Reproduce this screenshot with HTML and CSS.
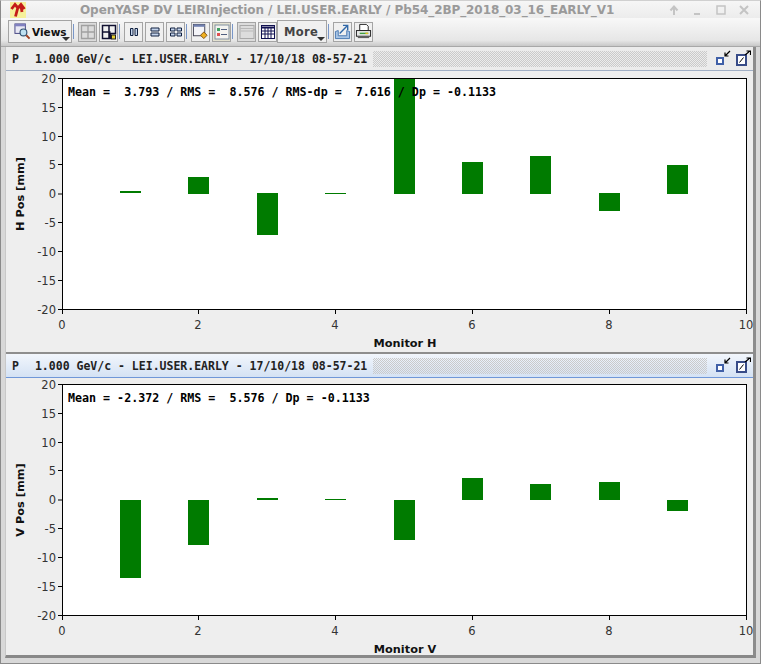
FILE: index.html
```html
<!DOCTYPE html>
<html>
<head>
<meta charset="utf-8">
<title>OpenYASP DV</title>
<link rel="stylesheet" href="styles.css">
</head>
<body>
<div class="window">
  <div class="titlebar">
    <svg class="appicon" width="16" height="16" viewBox="0 0 16 16"><rect width="16" height="16" fill="#f6f09a"/><path d="M1.500 7 L5 2.500 L8 6 L11 2.500 L14.500 7 M8 5 L5.500 14.500 M11 4 L12 10" fill="none" stroke="#c41c18" stroke-width="2.800"/></svg>
    <div class="title">OpenYASP DV LEIRInjection / LEI.USER.EARLY / Pb54_2BP_2018_03_16_EARLY_V1</div>
    <div class="wm">
      <svg width="12" height="12" viewBox="0 0 12 12"><path d="M6 11V3M2.500 6.500L6 2.500l3.500 4" fill="none" stroke="#c4c4c4" stroke-width="2"/></svg>
      <svg width="12" height="12" viewBox="0 0 12 12"><path d="M3 10h6" stroke="#c4c4c4" stroke-width="2"/></svg>
      <svg width="12" height="12" viewBox="0 0 12 12"><rect x="2" y="2" width="8" height="8" fill="none" stroke="#c4c4c4" stroke-width="1.500"/></svg>
      <svg width="12" height="12" viewBox="0 0 12 12"><path d="M2 2l8 8M10 2l-8 8" stroke="#c4c4c4" stroke-width="2"/></svg>
    </div>
  </div>
  <div class="toolbar">
    <button class="tb views">
      <svg width="17" height="17" viewBox="0 0 18 18"><rect x="1" y="1" width="11" height="10" fill="#e8e8f4" stroke="#404080"/><rect x="1" y="1" width="11" height="2.500" fill="#8080c0"/><circle cx="10" cy="10" r="3.600" fill="#bfe0f0" stroke="#305070" stroke-width="1.200"/><path d="M13 13l3.500 3.500" stroke="#a04020" stroke-width="2"/></svg>
      <span>Views</span><i class="caret"></i>
    </button>
    <i class="sep"></i>
    <button class="tb ic off"><svg width="16" height="16" viewBox="0 0 16 16"><path d="M1.500 1.500h13v13h-13zM8 1.500v13M1.500 8h13" fill="none" stroke="#a0a0a0" stroke-width="1.300"/></svg></button>
    <button class="tb ic"><svg width="16" height="16" viewBox="0 0 16 16"><path d="M1.500 1.500h13v8h-5v5h-8zM8 1.500v13M1.500 8h8" fill="none" stroke="#101030" stroke-width="1.500"/><rect x="10.500" y="11" width="4" height="4" fill="#e8d030" stroke="#202020"/></svg></button>
    <i class="sep"></i>
    <button class="tb ic"><svg width="12" height="12" viewBox="0 0 12 12"><path d="M2.500 2.500h2.500v7h-2.500zM7 2.500h2.500v7h-2.500z" fill="#c4d4ec" stroke="#102040"/></svg></button>
    <button class="tb ic"><svg width="12" height="12" viewBox="0 0 12 12"><path d="M2 2h8v3h-8zM2 7h8v3h-8z" fill="#c4d4ec" stroke="#102040"/></svg></button>
    <button class="tb ic"><svg width="14" height="12" viewBox="0 0 14 12"><path d="M1.500 2h4.500v3h-4.500zM8 2h4.500v3h-4.500zM1.500 7h4.500v3h-4.500zM8 7h4.500v3h-4.500z" fill="#c4d4ec" stroke="#102040"/></svg></button>
    <i class="sep"></i>
    <button class="tb ic"><svg width="17" height="17" viewBox="0 0 18 18"><rect x="1.500" y="1.500" width="12" height="12" fill="#f4f4f8" stroke="#404050"/><rect x="1.500" y="1.500" width="12" height="2.500" fill="#7080b0"/><path d="M12.500 9.500l3.500 3.500-3.500 3.500-3.500-3.500z" fill="#f0b020" stroke="#805010"/></svg></button>
    <button class="tb ic tint"><svg width="16" height="16" viewBox="0 0 16 16"><rect x="1" y="1" width="14" height="14" fill="#f4f4f0" stroke="#8090a0"/><rect x="3" y="4" width="3" height="3" fill="#40a060"/><path d="M7 5.500h6M7 10.500h6" stroke="#506080"/><rect x="3" y="9" width="3" height="3" fill="#e05050"/></svg></button>
    <i class="sep"></i>
    <button class="tb ic off"><svg width="16" height="16" viewBox="0 0 16 16"><rect x="1" y="1.500" width="14" height="13" fill="#dcdcdc" stroke="#a8a8a8"/><path d="M1 4.500h14M2 7h12" stroke="#b8b8b8"/></svg></button>
    <button class="tb ic"><svg width="16" height="16" viewBox="0 0 16 16"><rect x="1.500" y="1.500" width="13" height="13" fill="#fff" stroke="#101050"/><path d="M1.500 3.500h13" stroke="#101050" stroke-width="2"/><path d="M1.500 7h13M1.500 10h13M5 3v11M8 3v11M11 3v11" stroke="#101050"/></svg></button>
    <button class="tb more"><span>More</span><i class="caret"></i></button>
    <i class="sep"></i>
    <button class="tb ic"><svg width="17" height="17" viewBox="0 0 18 18"><path d="M1.500 9v7.500h15V9l-3 -1v5.500h-9V8z" fill="#a8c4e4" stroke="#4878b0"/><path d="M6 11L14 3M9.500 2.500h5v5" fill="none" stroke="#3068a8" stroke-width="1.500"/></svg></button>
    <button class="tb ic"><svg width="17" height="17" viewBox="0 0 18 18"><path d="M5 1.500h7l2 2V8H5z" fill="#fff" stroke="#202020"/><rect x="1.500" y="8" width="15" height="6" fill="#e8e8e8" stroke="#202020"/><path d="M5 11h9" stroke="#40a040" stroke-width="1.500"/><path d="M11 11h3" stroke="#e0c020" stroke-width="1.500"/><rect x="3" y="14" width="12" height="2" fill="#606060"/></svg></button>
  </div>
  <div class="content">
    <section class="panel">
      <div class="phead">
        <span class="ptext"><b>P</b><b>1.000 GeV/c - LEI.USER.EARLY - 17/10/18 08-57-21</b></span>
        <span class="dots"></span>
        <svg class="pic" width="15" height="17" viewBox="0 0 15 17"><rect x="1" y="8" width="6" height="6" fill="#fff" stroke="#4060a8" stroke-width="2"/><path d="M9 6l5-5M9 2.500V6h3.500" fill="none" stroke="#000" stroke-width="1.200"/></svg>
        <svg class="pic" width="15" height="17" viewBox="0 0 15 17"><rect x="1" y="5" width="9" height="10" fill="#fff" stroke="#384c88" stroke-width="2"/><path d="M3.500 12.500L7.500 7.500" stroke="#000"/><path d="M9 5l5-4M10.500 1h4v4" fill="none" stroke="#000" stroke-width="1.200"/></svg>
      </div>
      <svg class="chart" width="750" height="281" viewBox="1 0 750 281">
        <rect class="frame" x="57.500" y="7.500" width="684" height="231"/>
        <g class="bars">
          <rect x="115" y="120" width="21" height="2"/>
          <rect x="183" y="106" width="21" height="17"/>
          <rect x="252" y="122" width="21" height="42"/>
          <rect x="320" y="122" width="21" height="1"/>
          <rect x="389" y="7" width="21" height="116"/>
          <rect x="457" y="91" width="21" height="32"/>
          <rect x="525" y="85" width="21" height="38"/>
          <rect x="594" y="122" width="21" height="18"/>
          <rect x="662" y="94" width="21" height="29"/>
        </g>
        <rect class="edge" x="57.500" y="7.500" width="684" height="231"/>
        <path class="ticks" d="M53 7.500h4M53 36.500h4M53 65.500h4M53 93.500h4M53 123h4M53 151.500h4M53 180.500h4M53 209.500h4M53 238.500h4M57.500 238v5M193.500 238v5M330.500 238v5M467.500 238v5M604.500 238v5M741.500 238v5"/>
        <g class="ylab"><text x="51" y="12">20</text><text x="51" y="41">15</text><text x="51" y="70">10</text><text x="51" y="98">5</text><text x="51" y="127">0</text><text x="51" y="156">-5</text><text x="51" y="185">-10</text><text x="51" y="214">-15</text><text x="51" y="243">-20</text></g>
        <g class="xlab"><text x="57" y="258">0</text><text x="193" y="258">2</text><text x="330" y="258">4</text><text x="467" y="258">6</text><text x="604" y="258">8</text><text x="741" y="258">10</text></g>
        <text class="axis" x="400" y="276">Monitor H</text>
        <text class="axis" transform="translate(19 123) rotate(-90)">H Pos [mm]</text>
        <text class="stat" x="63" y="25" xml:space="preserve">Mean =  3.793 / RMS =  8.576 / RMS-dp =  7.616 / Dp = -0.1133</text>
      </svg>
    </section>
    <section class="panel second">
      <div class="phead active">
        <span class="ptext"><b>P</b><b>1.000 GeV/c - LEI.USER.EARLY - 17/10/18 08-57-21</b></span>
        <span class="dots"></span>
        <svg class="pic" width="15" height="17" viewBox="0 0 15 17"><rect x="1" y="8" width="6" height="6" fill="#fff" stroke="#4060a8" stroke-width="2"/><path d="M9 6l5-5M9 2.500V6h3.500" fill="none" stroke="#000" stroke-width="1.200"/></svg>
        <svg class="pic" width="15" height="17" viewBox="0 0 15 17"><rect x="1" y="5" width="9" height="10" fill="#fff" stroke="#384c88" stroke-width="2"/><path d="M3.500 12.500L7.500 7.500" stroke="#000"/><path d="M9 5l5-4M10.500 1h4v4" fill="none" stroke="#000" stroke-width="1.200"/></svg>
      </div>
      <svg class="chart" width="750" height="282" viewBox="1 1 750 282">
        <rect class="frame" x="57.500" y="7.500" width="684" height="231"/>
        <g class="bars">
          <rect x="115" y="123" width="21" height="78"/>
          <rect x="183" y="123" width="21" height="45"/>
          <rect x="252" y="121" width="21" height="2"/>
          <rect x="320" y="122" width="21" height="1"/>
          <rect x="389" y="123" width="21" height="40"/>
          <rect x="457" y="101" width="21" height="22"/>
          <rect x="525" y="107" width="21" height="16"/>
          <rect x="594" y="105" width="21" height="18"/>
          <rect x="662" y="123" width="21" height="11"/>
        </g>
        <rect class="edge" x="57.500" y="7.500" width="684" height="231"/>
        <path class="ticks" d="M53 7.500h4M53 36.500h4M53 65.500h4M53 93.500h4M53 123h4M53 151.500h4M53 180.500h4M53 209.500h4M53 238.500h4M57.500 238v5M193.500 238v5M330.500 238v5M467.500 238v5M604.500 238v5M741.500 238v5"/>
        <g class="ylab"><text x="51" y="12">20</text><text x="51" y="41">15</text><text x="51" y="70">10</text><text x="51" y="98">5</text><text x="51" y="127">0</text><text x="51" y="156">-5</text><text x="51" y="185">-10</text><text x="51" y="214">-15</text><text x="51" y="243">-20</text></g>
        <g class="xlab"><text x="57" y="258">0</text><text x="193" y="258">2</text><text x="330" y="258">4</text><text x="467" y="258">6</text><text x="604" y="258">8</text><text x="741" y="258">10</text></g>
        <text class="axis" x="400" y="276">Monitor V</text>
        <text class="axis" transform="translate(19 123) rotate(-90)">V Pos [mm]</text>
        <text class="stat" x="63" y="25" xml:space="preserve">Mean = -2.372 / RMS =  5.576 / Dp = -0.1133</text>
      </svg>
    </section>
  </div>
</div>
</body>
</html>
```
FILE: styles.css
```css
* { box-sizing: border-box; }
html, body { margin: 0; padding: 0; }
body { width: 761px; height: 664px; overflow: hidden; background: #eeeeee; font-family: "DejaVu Sans", sans-serif; }
.window { width: 761px; height: 664px; display: flex; flex-direction: column; background: #d8d8d8; border: 1px solid #8a8a8a; border-top-color: #d0d0d0; }
.titlebar { height: 17px; display: flex; align-items: center; padding: 0 10px 0 9px; background: linear-gradient(#f6f6f6, #ececec); flex: none; }
.appicon { flex: none; }
.title { margin-left: 54px; font-size: 12px; font-weight: bold; color: #9a9a9a; white-space: nowrap; letter-spacing: -0.08px; flex: 1; }
.wm { display: flex; gap: 11.5px; }
.toolbar { height: 29px; flex: none; display: flex; align-items: center; gap: 2px; padding: 2px 0 3px 7px; background: linear-gradient(#f8f8f8, #e6e6e6 80%, #c8c8c8); border-bottom: 1px solid #a8a8a8; }
.tb { height: 20px; margin: 0; padding: 0; display: flex; align-items: center; justify-content: center; position: relative; background: #f0f0f0; border: 1px solid #a4a4a4; border-radius: 0; font: bold 11.5px "DejaVu Sans", sans-serif; color: #111; }
.views { width: 64px; height: 23px; gap: 1px; justify-content: flex-start; padding-left: 5px; font-size: 10.5px; }
.more { width: 50px; height: 23px; margin-left: -2px; justify-content: flex-start; padding-left: 6px; letter-spacing: 0.3px; color: #444; }
.ic { width: 19px; }
.off { background: #dcdcdc; }
.tint { background: #e4e2d0; }
.sep { width: 1px; height: 15px; margin: 0 2px 0 -1px; background: #7896c8; flex: none; }
.caret { position: absolute; right: 1px; bottom: 1px; width: 0; height: 0; border: 4px solid transparent; border-top: 4px solid #333; border-bottom: 0; }
.content { flex: 1; min-height: 0; margin: 0 4px 5px 4px; background: #eeeeee; border-right: 3px solid #8c8c8c; border-left: 1px solid #c8c8c8; border-bottom: 3px solid #888; display: flex; flex-direction: column; }
.panel { display: flex; flex-direction: column; }
.second { border-top: 2px solid #8e8e8e; }
.phead { height: 24px; display: flex; align-items: center; padding: 0 2px 0 6px; background: #ececec; border-bottom: 1px solid #a0aec4; flex: none; gap: 5px; }
.active { background: linear-gradient(#f2f6fc, #d4e2f4); border-bottom: 1px solid #6f97d8; }
.ptext { display: flex; gap: 16px; font: bold 11.5px "DejaVu Sans Mono", monospace; color: #222; white-space: nowrap; }
.dots { flex: 1; height: 16px; margin: 0 4px 0 1px; background-image: conic-gradient(#cacaca 25%, transparent 0 50%, #cacaca 0 75%, transparent 0); background-size: 2px 2px; }
.pic { flex: none; }
.chart { display: block; flex: none; }
.bars rect { fill: #007b00; }
.frame { fill: #fff; stroke: none; }
.edge { fill: none; stroke: #000; }
.ticks { fill: none; stroke: #000; }
.ylab text { font: 11.5px "DejaVu Sans", sans-serif; text-anchor: end; fill: #333; }
.xlab text { font: 11.5px "DejaVu Sans", sans-serif; text-anchor: middle; fill: #333; }
.axis { font: bold 11.3px "DejaVu Sans", sans-serif; text-anchor: middle; fill: #111; }
.stat { font: bold 11.67px "DejaVu Sans Mono", monospace; fill: #000; white-space: pre; }
```
